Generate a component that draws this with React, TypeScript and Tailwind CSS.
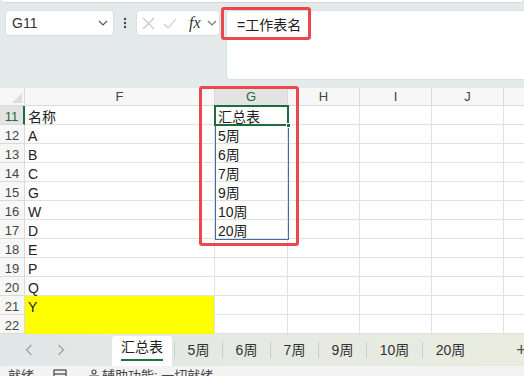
import React from "react";

const colW = [190, 73, 72, 72, 72];
const colLabels = ["F", "G", "H", "I", "J"];

const rows: { n: number; f: string; g: string }[] = [
  { n: 11, f: "名称", g: "汇总表" },
  { n: 12, f: "A", g: "5周" },
  { n: 13, f: "B", g: "6周" },
  { n: 14, f: "C", g: "7周" },
  { n: 15, f: "G", g: "9周" },
  { n: 16, f: "W", g: "10周" },
  { n: 17, f: "D", g: "20周" },
  { n: 18, f: "E", g: "" },
  { n: 19, f: "P", g: "" },
  { n: 20, f: "Q", g: "" },
  { n: 21, f: "Y", g: "" },
  { n: 22, f: "", g: "" },
];

const tabs = [
  { label: "5周", w: 48 },
  { label: "6周", w: 48 },
  { label: "7周", w: 48 },
  { label: "9周", w: 48 },
  { label: "10周", w: 56 },
  { label: "20周", w: 56 },
];

function Chevron({ className }: { className?: string }) {
  return (
    <svg width="10" height="6" viewBox="0 0 10 6" className={className}>
      <path d="M1 1l4 4 4-4" fill="none" stroke="currentColor" strokeWidth="1.2" />
    </svg>
  );
}

export default function App() {
  return (
    <div className="relative w-[524px] h-[376px] overflow-hidden bg-[#e4eaea] font-['Liberation_Sans','Noto_Sans_CJK_SC',sans-serif] text-[#222]">
      {/* ribbon bottom edge */}
      <div className="h-[3px] mx-[2px] bg-white rounded-b-[4px] border-b border-[#d3d9d9]" />

      {/* name box + formula bar */}
      <div className="flex items-start pt-[7px] h-[85px]">
        <div className="ml-[5px] w-[109px] h-[26px] bg-white rounded-[4px] border border-[#d9dede] flex items-center justify-between pl-[6px] pr-[5px]">
          <span className="text-[14px] text-[#333]">G11</span>
          <Chevron className="text-[#555]" />
        </div>
        <div className="w-[22px] h-[26px] flex items-center justify-center">
          <svg width="4" height="12" viewBox="0 0 4 12">
            <circle cx="2" cy="2" r="1.2" fill="#444" />
            <circle cx="2" cy="6" r="1.2" fill="#444" />
            <circle cx="2" cy="10" r="1.2" fill="#444" />
          </svg>
        </div>
        <div className="w-[84px] h-[26px] bg-white rounded-[4px] border border-[#d9dede] flex items-center pl-[4px]">
          <svg width="13" height="13" viewBox="0 0 13 13" className="ml-[1px]">
            <path d="M1 1l11 11M12 1L1 12" stroke="#c4c8c8" strokeWidth="1.1" fill="none" />
          </svg>
          <svg width="14" height="11" viewBox="0 0 14 11" className="ml-[8px]">
            <path d="M1 6l4 4L13 1" stroke="#c4c8c8" strokeWidth="1.1" fill="none" />
          </svg>
          <span className="ml-[12px] font-['Liberation_Serif',serif] italic text-[16px] leading-none text-[#333]">fx</span>
          <Chevron className="ml-[6px] text-[#777]" />
        </div>
        <div className="ml-[6px] flex-1 h-[70px] bg-white rounded-l-[4px] border border-r-0 border-[#d9dede] pl-[10px] pt-[2px]">
          <span className="text-[14px] leading-[20px] text-[#222]">=工作表名</span>
        </div>
      </div>

      {/* grid */}
      <div className="bg-white">
        <div className="flex h-[18px]">
          <div className="w-[25px] shrink-0 bg-[#f7f7f7] border-r border-b border-[#dadada] flex items-end justify-end pr-[2px] pb-[2px]">
            <svg width="10" height="10" viewBox="0 0 10 10">
              <path d="M10 0L10 10L0 10Z" fill="#dcdcdc" />
            </svg>
          </div>
          {colLabels.map((c, i) => (
            <div
              key={c}
              style={{ width: colW[i] }}
              className={`shrink-0 flex items-center justify-center text-[13px] border-r border-b ${
                c === "G"
                  ? "bg-[#e3e3e3] text-[#1d6b3e] border-b-[#1d6b3e] border-r-[#dadada]"
                  : "bg-[#f7f7f7] text-[#444] border-[#dadada]"
              }`}
            >
              {c}
            </div>
          ))}
          <div className="flex-1 bg-[#f7f7f7] border-b border-[#dadada]" />
        </div>

        {rows.map((r) => (
          <div key={r.n} className="flex h-[19px]">
            <div
              className={`w-[25px] shrink-0 flex items-end justify-center text-[13px] leading-[14px] border-b ${
                r.n === 11
                  ? "bg-[#e3e3e3] text-[#1d6b3e] border-r-2 border-r-[#1d6b3e] border-b-[#dadada]"
                  : "bg-[#f7f7f7] text-[#444] border-r border-[#dadada]"
              }`}
            >
              {r.n}
            </div>
            <div
              className={`w-[190px] shrink-0 flex items-end pl-[3px] text-[14px] leading-[14px] border-r border-b ${
                r.n >= 21 ? "bg-[#ffff00] border-[#ffff00] border-r-[#e1e1e1]" : "border-[#e1e1e1]"
              }`}
            >
              {r.f}
            </div>
            <div className="w-[73px] shrink-0 flex items-end pl-[3px] text-[14px] leading-[14px] border-r border-b border-[#e1e1e1]">
              {r.g}
            </div>
            <div className="w-[72px] shrink-0 border-r border-b border-[#e1e1e1]" />
            <div className="w-[72px] shrink-0 border-r border-b border-[#e1e1e1]" />
            <div className="w-[72px] shrink-0 border-r border-b border-[#e1e1e1]" />
            <div className="flex-1 border-b border-[#e1e1e1]" />
          </div>
        ))}
      </div>

      {/* sheet tabs */}
      <div className="flex items-center h-[32px] bg-gradient-to-r from-[#e1e7e7] to-[#eaecdf]">
        <div className="w-[112px] shrink-0 flex items-center">
          <svg width="8" height="12" viewBox="0 0 8 12" className="ml-[25px]">
            <path d="M6.5 1L1.5 6l5 5" stroke="#9aa2a2" strokeWidth="1.2" fill="none" />
          </svg>
          <svg width="8" height="12" viewBox="0 0 8 12" className="ml-[24px]">
            <path d="M1.5 1l5 5-5 5" stroke="#9aa2a2" strokeWidth="1.2" fill="none" />
          </svg>
        </div>
        <div className="w-[60px] h-[30px] mt-[2px] shrink-0 bg-white rounded-t-[3px] flex flex-col items-center justify-center">
          <span className="text-[14px] leading-[18px] text-[#222] mt-[-3px]">汇总表</span>
          <div className="w-[42px] h-[2px] bg-[#1e7145] mt-[3px]" />
        </div>
        <div className="w-[2px] shrink-0" />
        {tabs.map((t) => (
          <div key={t.label} className="flex items-center shrink-0">
            <div className="w-px h-[16px] bg-[#c9cdcd]" />
            <div style={{ width: t.w - 1 }} className="text-center text-[14px] text-[#333]">
              {t.label}
            </div>
          </div>
        ))}
        <div className="w-px h-[16px] bg-[#c9cdcd]" />
        <span className="ml-[38px] text-[18px] text-[#555] leading-none">+</span>
      </div>

      {/* status bar */}
      <div className="h-[10px] bg-[#f3f3f3] flex items-start text-[13px] leading-[16px] text-[#444] pt-[2px]">
        <span className="ml-[8px]">就绪</span>
        <svg width="14" height="14" viewBox="0 0 14 14" className="ml-[19px] mt-[1px]">
          <rect x="1" y="1" width="12" height="12" fill="none" stroke="#444" strokeWidth="1.2" />
          <path d="M1 5h12" stroke="#444" strokeWidth="1.2" />
        </svg>
        <svg width="12" height="14" viewBox="0 0 12 14" className="ml-[21px] mt-[1px]">
          <circle cx="6" cy="3" r="2" fill="none" stroke="#444" strokeWidth="1.1" />
          <path d="M1 7h10M6 7v6" stroke="#444" strokeWidth="1.1" />
        </svg>
        <span className="ml-[2px]">辅助功能: 一切就绪</span>
      </div>

      {/* selection overlays */}
      <div className="absolute left-[215px] top-[106px] w-[74px] h-[134px] border border-[#3d6fa7]" />
      <div className="absolute left-[214px] top-[105px] w-[75px] h-[21px] border-2 border-[#1d6b3e]" />
      <div className="absolute left-[286px] top-[123px] w-[5px] h-[5px] bg-[#1d6b3e] border border-white" />

      {/* red annotation boxes */}
      <div className="absolute left-[221px] top-[7px] w-[90px] h-[33px] border-[3px] border-[#e9484e] rounded-[3px]" />
      <div className="absolute left-[199px] top-[86px] w-[100px] h-[160px] border-[3px] border-[#e9484e] rounded-[3px]" />
    </div>
  );
}
